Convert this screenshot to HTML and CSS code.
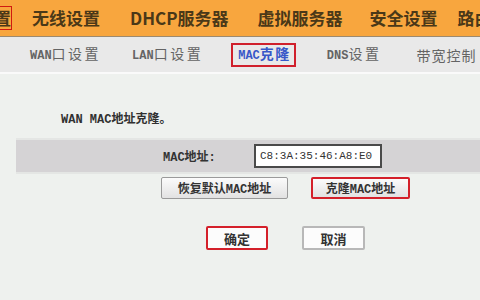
FILE: index.html
```html
<!DOCTYPE html>
<html>
<head>
<meta charset="utf-8">
<link rel="stylesheet" href="styles.css">
</head>
<body>
<div class="topnav">
  <span class="top-item cut">置</span>
  <span class="top-item">无线设置</span>
  <span class="top-item">DHCP服务器</span>
  <span class="top-item">虚拟服务器</span>
  <span class="top-item">安全设置</span>
  <span class="top-item">路由功能</span>
</div>
<div class="subnav">
  <span class="sub-item"><span class="en">WAN</span>口设置</span>
  <span class="sub-item"><span class="en">LAN</span>口设置</span>
  <span class="sub-item active"><span class="en">MAC</span>克隆</span>
  <span class="sub-item dns"><span class="en">DNS</span>设置</span>
  <span class="sub-item bw">带宽控制</span>
</div>
<div class="content">
  <div class="title">WAN MAC地址克隆。</div>
  <div class="band">
    <span class="label">MAC地址:</span>
    <span class="input">C8:3A:35:46:A8:E0</span>
  </div>
  <div class="btnrow">
    <span class="btn restore">恢复默认MAC地址</span>
    <span class="btn clone hl">克隆MAC地址</span>
  </div>
  <div class="okrow">
    <span class="btn big ok hl">确定</span>
    <span class="btn big cancel">取消</span>
  </div>
</div>
</body>
</html>
```
FILE: styles.css
```css
html, body {
  margin: 0;
  padding: 0;
  width: 480px;
  height: 300px;
  overflow: hidden;
  background: #eef1ee;
  font-family: "Liberation Mono", "Noto Sans CJK SC", monospace;
}
.topnav {
  height: 36px;
  background: #f8a63e;
  border-bottom: 1px solid #9c8a70;
  display: flex;
  align-items: center;
  gap: 27px;
  white-space: nowrap;
  overflow: hidden;
  font-family: "Noto Sans CJK SC", sans-serif;
  font-weight: bold;
  font-size: 17px;
  color: #4a3818;
}
.top-item {
  line-height: 22px;
  flex: none;
}
.top-item.cut {
  width: 11px;
  height: 22px;
  overflow: hidden;
  direction: rtl;
  border: 1px solid #d01a10;
  border-left: none;
  margin-right: -7px;
  line-height: 22px;
}
.top-item:nth-child(3) { margin-left: 3px; }
.top-item:nth-child(4) { margin-left: 2px; }
.top-item:nth-child(5) { margin-right: -2px; }
.top-item:nth-child(6) { margin-left: -5px; }
.subnav {
  height: 35px;
  background: #e9e9e9;
  border-bottom: 2px solid #fafafa;
  display: flex;
  align-items: center;
  gap: 31px;
  padding-left: 30px;
  white-space: nowrap;
  overflow: hidden;
  font-family: "Noto Sans CJK SC", sans-serif;
  font-size: 14px;
  letter-spacing: 2.5px;
  color: #646464;
}
.sub-item {
  flex: none;
  line-height: 18px;
}
.sub-item .en {
  font-family: "Liberation Mono", monospace;
  font-weight: bold;
  font-size: 12px;
  letter-spacing: 0;
}
.sub-item.active {
  color: #3858c8;
  font-weight: bold;
  border: 2px solid #d0202c;
  padding: 0 3px 0 5px;
  margin: 0 -3px 0 -3px;
  letter-spacing: 1.5px;
  line-height: 17px;
}
.sub-item.dns { margin-left: 3px; }
.sub-item.bw { margin-left: 4px; letter-spacing: 1px; }
.content {
  padding-top: 39px;
}
.title {
  margin-left: 61px;
  font-size: 12px;
  font-weight: bold;
  line-height: 14px;
  color: #303030;
}
.band {
  margin: 13px 0 0 16px;
  height: 32px;
  background: #d5d3d5;
  box-shadow: 0 -2px 0 #e4e6e4, 0 2px 0 #e4e6e4;
  display: flex;
  align-items: center;
  padding-left: 147px;
}
.label {
  width: 91px;
  font-size: 12px;
  font-weight: bold;
  color: #333;
}
.input {
  width: 120px;
  height: 20px;
  line-height: 20px;
  padding-left: 4px;
  background: #fff;
  border: 2px solid #4a4a4a;
  font-size: 11px;
  color: #333;
}
.btnrow {
  display: flex;
  margin-top: 5px;
  padding-left: 161px;
  gap: 23px;
}
.btn {
  display: flex;
  align-items: center;
  justify-content: center;
  box-sizing: border-box;
  height: 22px;
  background: linear-gradient(#fbfbfb, #e2e2e2);
  border: 1px solid #9a9a9a;
  border-radius: 2px;
  font-size: 12px;
  font-weight: bold;
  color: #333;
}
.btn.restore { width: 127px; }
.btn.clone { width: 99px; }
.btn.hl {
  border: 2px solid #d4202a;
}
.okrow {
  display: flex;
  margin-top: 27px;
  padding-left: 206px;
  gap: 34px;
}
.btn.big {
  height: 24px;
  font-size: 13px;
  background: #fcfcfc;
  font-family: "Noto Sans CJK SC", sans-serif;
}
.btn.ok { width: 62px; }
.btn.cancel { width: 63px; border: 2px solid #b8b8b8; }
```
